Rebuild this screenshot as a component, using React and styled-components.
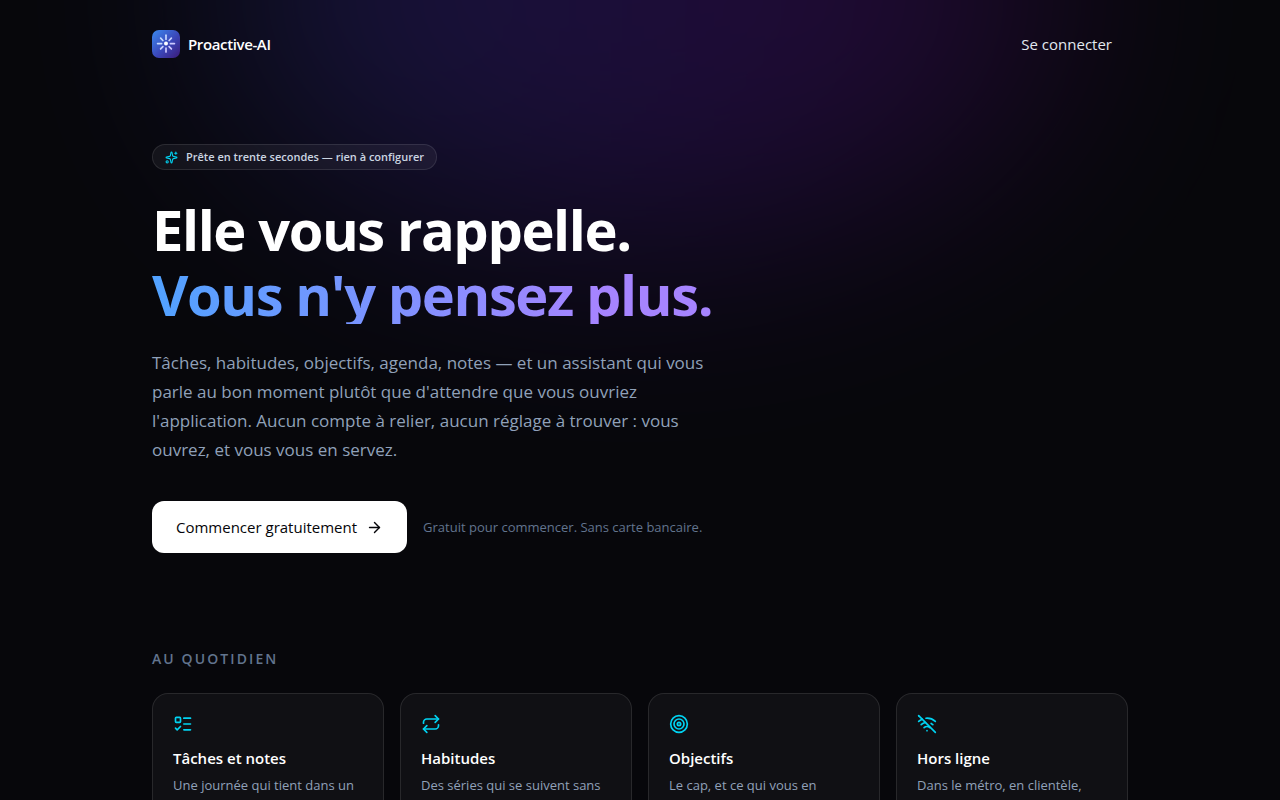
import React from "react";
import styled, { createGlobalStyle } from "styled-components";
import { ArrowRight, ListTodo, Repeat, Sparkles, Target, WifiOff } from "lucide-react";

const GlobalStyle = createGlobalStyle`
  *, *::before, *::after { box-sizing: border-box; }
  body {
    margin: 0;
    background: #07070b;
    color: #fff;
    font-family: "Segoe UI", "Open Sans", "Noto Sans", sans-serif;
    font-size: 15px;
    line-height: 24px;
  }
  h1, h2, h3, p, ul { margin: 0; padding: 0; }
`;

const Page = styled.div`
  position: relative;
  height: 100vh;
  overflow: hidden;
  background: #07070b;
`;

const Glow = styled.div`
  position: absolute;
  top: -256px;
  left: 50%;
  width: 840px;
  height: 500px;
  margin-left: -420px;
  border-radius: 50%;
  opacity: 0.19;
  background: linear-gradient(90deg, #4a5aff, #7a28ff 50%, #8e14c0);
  filter: blur(110px);
  pointer-events: none;
`;

const Container = styled.div`
  position: relative;
  max-width: 1024px;
  margin: 0 auto;
  padding: 0 24px;
`;

const Header = styled.header`
  display: flex;
  align-items: center;
  justify-content: space-between;
  padding: 24px 0;
`;

const Brand = styled.a`
  display: flex;
  align-items: center;
  gap: 8px;
  color: #fff;
  font-weight: 600;
  letter-spacing: -0.025em;
  text-decoration: none;
`;

const LoginLink = styled.a`
  padding: 8px 16px;
  color: #e2e8f0;
  text-decoration: none;
`;

const Hero = styled.section`
  display: flex;
  flex-direction: column;
  align-items: flex-start;
  padding-top: 56px;
`;

const Pill = styled.p`
  display: flex;
  align-items: center;
  gap: 8px;
  height: 26px;
  padding: 0 12px;
  border: 1px solid rgba(255, 255, 255, 0.1);
  border-radius: 13px;
  background: rgba(255, 255, 255, 0.05);
  color: #cbd5e1;
  font-size: 11px;
  font-weight: 600;

  svg { color: #00d3f2; }
`;

const Title = styled.h1`
  margin-top: 27px;
  font-size: 56px;
  font-weight: 700;
  line-height: 65px;
  letter-spacing: -0.025em;
`;

const TitleAccent = styled.span`
  display: block;
  height: 62px;
  background: linear-gradient(90deg, #51a2ff, #a684ff 80%, #a684ff);
  background-clip: text;
  -webkit-background-clip: text;
  color: transparent;
`;

const Lead = styled.p`
  max-width: 576px;
  margin-top: 24px;
  color: #90a1b9;
  font-size: 17px;
  line-height: 29px;
`;

const Actions = styled.div`
  display: flex;
  align-items: center;
  gap: 16px;
  margin-top: 37px;
`;

const StartButton = styled.button`
  display: flex;
  align-items: center;
  gap: 9px;
  height: 52px;
  padding: 0 24px;
  border: 0;
  border-radius: 12px;
  background: #fff;
  color: #050509;
  font: inherit;
`;

const Note = styled.p`
  color: #62748e;
  font-size: 13px;
`;

const Features = styled.section`
  padding-top: 96px;
`;

const SectionLabel = styled.h2`
  color: #62748e;
  font-size: 14px;
  font-weight: 600;
  line-height: 20px;
  letter-spacing: 0.15em;
  text-transform: uppercase;
`;

const CardGrid = styled.ul`
  display: grid;
  grid-template-columns: repeat(4, 1fr);
  gap: 16px;
  margin-top: 24px;
  list-style: none;
`;

const Card = styled.li`
  min-height: 176px;
  padding: 20px;
  border: 1px solid rgba(255, 255, 255, 0.1);
  border-radius: 16px;
  background: rgba(255, 255, 255, 0.04);

  svg { display: block; color: #00d3f2; }
`;

const CardTitle = styled.h3`
  margin-top: 12px;
  font-size: 15px;
  font-weight: 600;
  line-height: 24px;
`;

const CardText = styled.p`
  margin-top: 4px;
  color: #90a1b9;
  font-size: 13px;
  line-height: 23px;
`;

const RAYS = [0, 45, 90, 135, 180, 225, 270, 315];

function Logo() {
  return (
    <svg width="28" height="28" viewBox="0 0 28 28" aria-hidden="true">
      <defs>
        <linearGradient id="tile" x1="0" y1="0" x2="1" y2="1">
          <stop offset="0" stopColor="#3b8af0" />
          <stop offset="0.55" stopColor="#3b46b8" />
          <stop offset="1" stopColor="#3b1a78" />
        </linearGradient>
        <linearGradient id="ray" gradientUnits="userSpaceOnUse" x1="5" y1="5" x2="23" y2="23">
          <stop offset="0" stopColor="#bfe3ff" />
          <stop offset="1" stopColor="#d3bcff" />
        </linearGradient>
      </defs>
      <rect width="28" height="28" rx="7" fill="url(#tile)" />
      <g fill="none" stroke="url(#ray)" strokeWidth="1.7" strokeLinecap="round">
        {RAYS.map((angle) => {
          const r = (angle * Math.PI) / 180;
          const outer = angle % 90 === 0 ? 8.4 : 7.6;
          return (
            <path
              key={angle}
              d={`M${14 + 4.4 * Math.cos(r)} ${13.6 + 4.4 * Math.sin(r)}L${14 + outer * Math.cos(r)} ${13.6 + outer * Math.sin(r)}`}
            />
          );
        })}
      </g>
      <circle cx="14" cy="13.6" r="2" fill="#fff" />
    </svg>
  );
}

const FEATURES = [
  { icon: ListTodo, title: "Tâches et notes", text: "Une journée qui tient dans un" },
  { icon: Repeat, title: "Habitudes", text: "Des séries qui se suivent sans" },
  { icon: Target, title: "Objectifs", text: "Le cap, et ce qui vous en" },
  { icon: WifiOff, title: "Hors ligne", text: "Dans le métro, en clientèle," },
];

export default function App() {
  return (
    <Page>
      <GlobalStyle />
      <Glow />
      <Container>
        <Header>
          <Brand href="#">
            <Logo />
            Proactive-AI
          </Brand>
          <LoginLink href="#connexion">Se connecter</LoginLink>
        </Header>
        <main>
          <Hero>
            <Pill>
              <Sparkles size={13} aria-hidden="true" />
              Prête en trente secondes — rien à configurer
            </Pill>
            <Title>
              Elle vous rappelle.
              <TitleAccent>Vous n'y pensez plus.</TitleAccent>
            </Title>
            <Lead>
              Tâches, habitudes, objectifs, agenda, notes — et un assistant qui vous parle au bon
              moment plutôt que d'attendre que vous ouvriez l'application. Aucun compte à relier,
              aucun réglage à trouver : vous ouvrez, et vous vous en servez.
            </Lead>
            <Actions>
              <StartButton type="button">
                Commencer gratuitement
                <ArrowRight size={17} aria-hidden="true" />
              </StartButton>
              <Note>Gratuit pour commencer. Sans carte bancaire.</Note>
            </Actions>
          </Hero>
          <Features>
            <SectionLabel>Au quotidien</SectionLabel>
            <CardGrid>
              {FEATURES.map(({ icon: Icon, title, text }) => (
                <Card key={title}>
                  <Icon size={20} aria-hidden="true" />
                  <CardTitle>{title}</CardTitle>
                  <CardText>{text}</CardText>
                </Card>
              ))}
            </CardGrid>
          </Features>
        </main>
      </Container>
    </Page>
  );
}
